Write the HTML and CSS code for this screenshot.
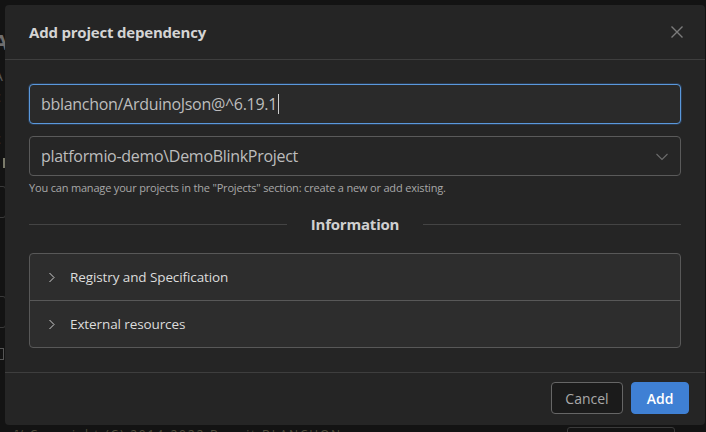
FILE: index.html
```html
<!DOCTYPE html>
<html lang="en">
<head>
<meta charset="utf-8">
<title>Add project dependency</title>
<link rel="stylesheet" href="styles.css">
</head>
<body>
<div class="page">
  <div class="page-col">
    <div class="pg-title">A</div>
    <div class="pg-line">A</div>
    <div class="pg-line">c</div>
    <div class="pg-line">r</div>
    <div class="pg-line">c</div>
    <div class="pg-bar"></div>
    <div class="pg-box"></div>
    <div class="pg-box pg-box2"></div>
    <div class="pg-check"></div>
  </div>
  <div class="pg-footer">
    <span class="pg-copy">ⅆ/ Copyright (C) 2014-2022 Benoit BLANCHON</span>
    <span class="pg-btn"></span>
  </div>
</div>

<div class="dialog">
  <div class="dlg-header">
    <h1 class="dlg-title">Add project dependency</h1>
    <svg class="close" width="12" height="12" viewBox="0 0 12 12"><path d="M0.5 0.5L11.5 11.5M11.5 0.5L0.5 11.5" stroke="#7b7b7b" stroke-width="1.4" fill="none"/></svg>
  </div>
  <div class="dlg-body">
    <div class="field field-focus"><span class="field-text">bblanchon/ArduinoJson@^6.19.1</span><span class="caret"></span></div>
    <div class="field field-select">
      <span class="field-text">platformio-demo\DemoBlinkProject</span>
      <svg class="sel-chev" width="12" height="8" viewBox="0 0 12 8"><path d="M0.5 1L6 6.5L11.5 1" stroke="#6c6c6c" stroke-width="1.1" fill="none"/></svg>
    </div>
    <div class="hint">You can manage your projects in the "Projects" section: create a new or add existing.</div>
    <div class="divider"><span class="div-line"></span><span class="div-text">Information</span><span class="div-line"></span></div>
    <div class="accordion">
      <div class="acc-row">
        <svg class="acc-chev" width="8" height="11" viewBox="0 0 8 11"><path d="M1.5 1L6 5.5L1.5 10" stroke="#cfcfcf" stroke-width="1" fill="none"/></svg>
        <span>Registry and Specification</span>
      </div>
      <div class="acc-row">
        <svg class="acc-chev" width="8" height="11" viewBox="0 0 8 11"><path d="M1.5 1L6 5.5L1.5 10" stroke="#cfcfcf" stroke-width="1" fill="none"/></svg>
        <span>External resources</span>
      </div>
    </div>
  </div>
  <div class="dlg-footer">
    <button class="btn btn-cancel">Cancel</button>
    <button class="btn btn-add">Add</button>
  </div>
</div>
</body>
</html>
```
FILE: styles.css
```css
html, body {
  margin: 0;
  padding: 0;
}
body {
  width: 706px;
  height: 432px;
  overflow: hidden;
  background: #131313;
  font-family: "Open Sans", "Noto Sans", sans-serif;
  position: relative;
}
.page {
  height: 432px;
  display: flex;
  flex-direction: column;
  justify-content: space-between;
}
.page-col {
  margin-left: -8px;
  padding-top: 26px;
  display: flex;
  flex-direction: column;
  color: #5a5a5a;
}
.pg-title {
  font-size: 22px;
  font-weight: 700;
  color: #6e6e6e;
  height: 40px;
  margin-left: 1px;
}
.pg-line {
  font-size: 14px;
  height: 21px;
  margin-left: 2px;
}
.pg-bar {
  width: 11px;
  height: 10px;
  margin-top: 8px;
  border-right: 2px solid #7a7a6a;
}
.pg-box {
  margin-top: 18px;
  width: 12px;
  height: 30px;
  border: 1px solid #3a3a3a;
  border-radius: 3px;
}
.pg-box2 {
  margin-top: 78px;
}
.pg-check {
  margin-top: 20px;
  width: 10px;
  height: 10px;
  border: 1px solid #555;
}
.pg-footer {
  height: 7px;
  display: flex;
  justify-content: space-between;
  align-items: flex-start;
  overflow: hidden;
}
.pg-copy {
  margin-left: 10px;
  margin-top: 2px;
  font-size: 12px;
  color: #4e4c3a;
  letter-spacing: 1.8px;
  line-height: 16px;
}
.pg-btn {
  width: 106px;
  height: 14px;
  margin-right: 31px;
  border: 1px solid #3a3a3a;
  border-radius: 3px;
  margin-top: 2px;
}

.dialog {
  position: absolute;
  left: 5px;
  top: 5px;
  width: 700px;
  height: 420px;
  background: #252525;
  border-radius: 4px;
  display: flex;
  flex-direction: column;
  box-sizing: border-box;
}
.dlg-header {
  height: 55px;
  box-sizing: border-box;
  border-bottom: 1px solid #3e3e3e;
  display: flex;
  align-items: center;
  justify-content: space-between;
  padding: 0 22px 0 24px;
}
.dlg-title {
  margin: 0;
  font-size: 15px;
  font-weight: 700;
  color: #d4d4d4;
  letter-spacing: -0.2px;
}
.close {
  display: block;
}
.dlg-body {
  flex: 1;
  padding: 24px 24px 0 24px;
  display: flex;
  flex-direction: column;
}
.field {
  height: 40px;
  box-sizing: border-box;
  border: 1px solid #5a5a5a;
  border-radius: 4px;
  background: #262626;
  display: flex;
  align-items: center;
  padding: 0 12px 0 11px;
  color: #bdbdbd;
  font-size: 16px;
  letter-spacing: -0.3px;
}
.field-focus {
  border-color: #5a98dc;
  background: #2a2a2a;
  box-shadow: 0 0 0 1px rgba(60, 120, 200, 0.25);
}
.caret {
  width: 1px;
  height: 20px;
  background: #cfcfcf;
  margin-left: 1px;
}
.field-select {
  margin-top: 12px;
  justify-content: space-between;
  padding-right: 12px;
}
.sel-chev {
  display: block;
  margin-top: 1px;
}
.hint {
  margin-top: 4px;
  font-size: 11px;
  color: #a8a8a8;
  letter-spacing: -0.18px;
  line-height: 15px;
}
.divider {
  margin-top: 18px;
  display: flex;
  align-items: center;
  gap: 24px;
  height: 22px;
}
.div-line {
  flex: 1;
  height: 1px;
  background: #444;
}
.div-text {
  font-size: 15px;
  font-weight: 700;
  color: #d0d0d0;
  letter-spacing: -0.2px;
  margin-top: -1px;
}
.accordion {
  margin-top: 18px;
  border: 1px solid #585858;
  border-radius: 4px;
  background: #2d2d2d;
}
.acc-row {
  height: 46px;
  display: flex;
  align-items: center;
  padding-left: 18px;
  gap: 14px;
  font-size: 13.5px;
  color: #dcdcdc;
  letter-spacing: -0.1px;
}
.acc-row + .acc-row {
  border-top: 1px solid #585858;
}
.acc-chev {
  display: block;
}
.dlg-footer {
  height: 53px;
  box-sizing: border-box;
  border-top: 1px solid #3e3e3e;
  display: flex;
  justify-content: flex-end;
  align-items: center;
  gap: 8px;
  padding: 0 16px 2px 0;
}
.btn {
  height: 32px;
  border-radius: 4px;
  font-family: "Open Sans", "Noto Sans", sans-serif;
  font-size: 14px;
  padding: 0;
  cursor: pointer;
}
.btn-cancel {
  width: 72px;
  background: #1b1b1b;
  border: 1px solid #666;
  color: #a9a9a9;
}
.btn-add {
  width: 58px;
  background: #3f80d4;
  border: 1px solid #3f80d4;
  color: #ffffff;
  font-weight: 600;
}
```
